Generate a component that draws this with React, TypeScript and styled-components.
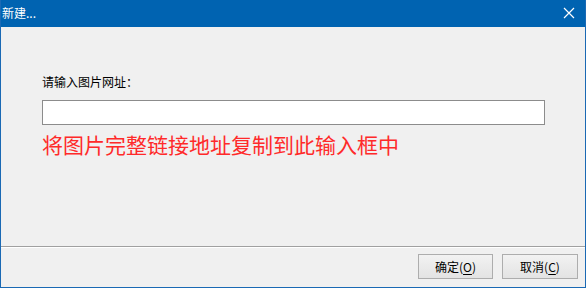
import React, { useState } from "react";
import styled, { createGlobalStyle } from "styled-components";

const GlobalStyle = createGlobalStyle`
  html, body {
    margin: 0;
    padding: 0;
    background: #f0f0f0;
  }
  body {
    font-family: "Noto Sans CJK SC", "Liberation Sans", sans-serif;
  }
`;

const Window = styled.div`
  width: 586px;
  height: 288px;
  box-sizing: border-box;
  display: flex;
  flex-direction: column;
  background: #f0f0f0;
  border: 1px solid #1a69b4;
  border-top: none;
  overflow: hidden;
`;

const TitleBar = styled.div`
  height: 26px;
  flex: 0 0 26px;
  background: #0063b1;
  display: flex;
  align-items: center;
  justify-content: space-between;
  padding: 0 9px 1px 2px;
  margin: 0 -1px;
  color: #ffffff;
`;

const Title = styled.span`
  font-size: 12px;
  line-height: 16px;
`;

const CloseButton = styled.button`
  width: 16px;
  height: 16px;
  padding: 0;
  border: none;
  background: transparent;
  display: flex;
  align-items: center;
  justify-content: center;
`;

const Body = styled.div`
  flex: 1;
  display: flex;
  flex-direction: column;
  padding: 47px 40px 0 41px;
`;

const Label = styled.label`
  font-size: 12px;
  line-height: 16px;
  color: #000000;
  margin-bottom: 10px;
`;

const UrlInput = styled.input`
  box-sizing: border-box;
  width: 503px;
  height: 25px;
  border: 1px solid #8c8c8c;
  background: #ffffff;
  outline: none;
  padding: 0 4px;
  font-size: 12px;
`;

const Hint = styled.div`
  margin-top: 6px;
  font-size: 21px;
  line-height: 26px;
  color: #ff2a2a;
`;

const Footer = styled.div`
  border-top: 1px solid #a0a0a0;
  box-shadow: inset 0 1px 0 #ffffff;
  padding: 7px 7px 8px 0;
  display: flex;
  justify-content: flex-end;
  gap: 9px;
`;

const DialogButton = styled.button<{ $wide?: boolean }>`
  box-sizing: border-box;
  width: ${(p) => (p.$wide ? 76 : 75)}px;
  height: 25px;
  border: 1px solid #adadad;
  background: linear-gradient(#f2f2f2, #e3e3e3);
  font-family: "Noto Sans CJK SC", "Liberation Sans", sans-serif;
  font-size: 12px;
  color: #000000;
  padding: 0;
  display: flex;
  align-items: center;
  justify-content: center;

  u {
    text-underline-offset: 2px;
  }
`;

const CloseIcon = () => (
  <svg width="12" height="12" viewBox="0 0 12 12">
    <path d="M1 1 L11 11 M11 1 L1 11" stroke="#ffffff" strokeWidth="1.2" fill="none" />
  </svg>
);

export default function App() {
  const [url, setUrl] = useState("");

  return (
    <>
      <GlobalStyle />
      <Window>
        <TitleBar>
          <Title>新建...</Title>
          <CloseButton aria-label="关闭">
            <CloseIcon />
          </CloseButton>
        </TitleBar>
        <Body>
          <Label htmlFor="url">请输入图片网址：</Label>
          <UrlInput id="url" value={url} onChange={(e) => setUrl(e.target.value)} />
          <Hint>将图片完整链接地址复制到此输入框中</Hint>
        </Body>
        <Footer>
          <DialogButton>
            确定(<u>O</u>)
          </DialogButton>
          <DialogButton $wide>
            取消(<u>C</u>)
          </DialogButton>
        </Footer>
      </Window>
    </>
  );
}
